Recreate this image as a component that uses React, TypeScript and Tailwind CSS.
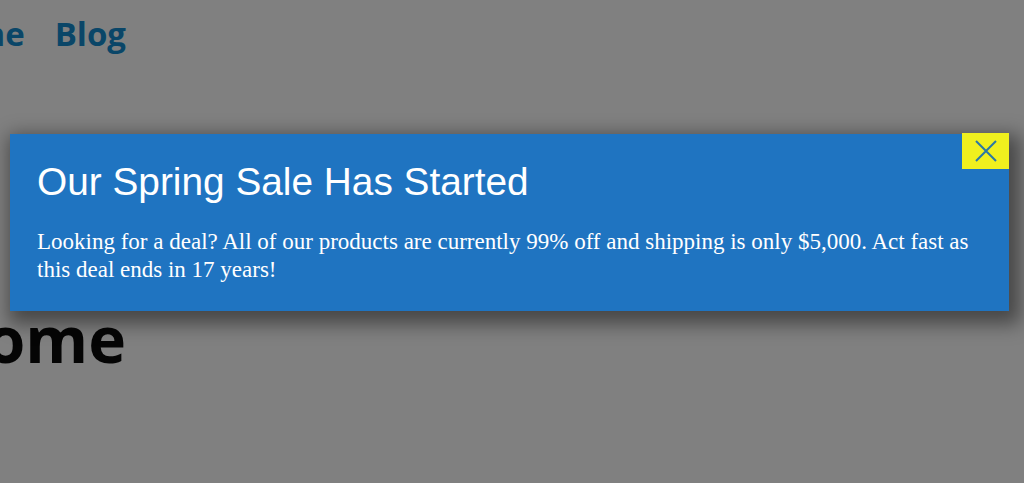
import React from "react";

const App: React.FC = () => {
  return (
    <div className="relative h-[483px] w-full overflow-hidden bg-[#808080]">
      {/* Page behind the overlay (dimmed) */}
      <div className="font-['Open_Sans',sans-serif]">
        {/* Nav */}
        <nav className="flex w-[126px] justify-end gap-[30px] whitespace-nowrap pt-[12px] text-[33px] font-bold leading-[44px] text-[#0a4668]">
          <a>Home</a>
          <a>Blog</a>
        </nav>

        {/* Heading */}
        <h1 className="mt-[243px] flex w-[126px] justify-end whitespace-nowrap text-[64px] font-bold leading-[80px] text-[#050505]">
          Welcome
        </h1>
      </div>

      {/* Sale popup */}
      <div className="absolute left-[10px] top-[134px] w-[999px] bg-[#1f74c1] px-[27px] pb-[27px] pt-[28px] shadow-[5px_7px_18px_6px_rgba(0,0,0,0.45)]">
        <button className="absolute right-0 top-[-1px] flex h-[36px] w-[47px] items-center justify-center bg-[#f0f01e]">
          <svg width="22" height="22" viewBox="0 0 22 22" fill="none">
            <path
              d="M1 1L21 21M21 1L1 21"
              stroke="#2a78a6"
              strokeWidth="2"
            />
          </svg>
        </button>

        <h2 className="font-['Liberation_Sans',Arial,sans-serif] text-[38.8px] leading-[39px] text-white">
          Our Spring Sale Has Started
        </h2>
        <p className="mt-[27px] font-['Liberation_Serif','Times_New_Roman',serif] text-[23px] leading-[28px] text-white">
          Looking for a deal? All of our products are currently 99% off and
          shipping is only $5,000. Act fast as this deal ends in 17 years!
        </p>
      </div>
    </div>
  );
};

export default App;
